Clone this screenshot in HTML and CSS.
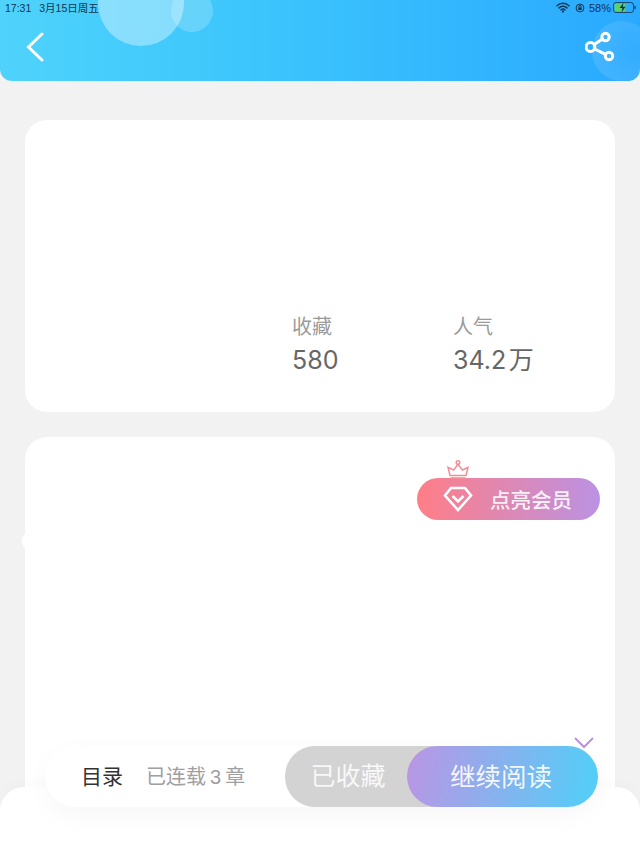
FILE: index.html
```html
<!DOCTYPE html>
<html>
    <head>
        <meta charset="utf-8">
        <meta name="viewport" content="width=device-width, initial-scale=1">
        <link rel="stylesheet" href="styles.css">
    </head>
    <body>
        <header class="cabecera">
            <div class="burbuja burbujaGrande"></div>
            <div class="burbuja burbujaChica"></div>
            <div class="burbuja burbujaDerecha"></div>
            <div class="estado">
                <span class="estadoHora">17:31</span>
                <span class="estadoFecha">3月15日周五</span>
                <div class="dummy"></div>
                <svg class="icoWifi" width="14" height="11" viewBox="0 0 14 11">
                    <path d="M1 3.8 A8.5 8.5 0 0 1 13 3.8 M3.1 5.9 A5.5 5.5 0 0 1 10.9 5.9 M5.1 7.9 A2.7 2.7 0 0 1 8.9 7.9" />
                    <circle cx="7" cy="9.6" r="1.1" />
                </svg>
                <svg class="icoRotacion" width="10" height="10" viewBox="0 0 10 10">
                    <circle cx="5" cy="5" r="3.9" />
                    <rect x="3.3" y="4.4" width="3.4" height="2.6" />
                    <path d="M3.9 4.4 V3.6 A1.1 1.1 0 0 1 6.1 3.6 V4.4" />
                </svg>
                <span class="estadoBateria">58%</span>
                <svg class="icoBateria" width="23" height="11" viewBox="0 0 23 11">
                    <rect class="bateriaBorde" x="0.5" y="0.5" width="20" height="10" rx="2.6" />
                    <rect class="bateriaNivel" x="1.5" y="1.5" width="11" height="8" rx="1.6" />
                    <path class="bateriaRayo" d="M10.6 0.6 L6.6 6 H9.4 L8.4 10.4 L12.6 4.8 H9.8 Z" />
                    <rect class="bateriaPunta" x="21.4" y="3.8" width="1.2" height="3.4" rx="0.6" />
                </svg>
            </div>
            <nav class="barra">
                <button class="botonIcono">
                    <svg width="20" height="32" viewBox="0 0 20 32">
                        <path d="M17 3 L3.5 16 L17 29" />
                    </svg>
                </button>
                <button class="botonIcono">
                    <svg width="30" height="32" viewBox="0 0 30 32">
                        <circle cx="5.5" cy="16" r="4.4" />
                        <circle cx="20.5" cy="6" r="3.7" />
                        <circle cx="24" cy="25" r="3.7" />
                        <path d="M9.3 13.6 L17.4 8 M9.6 18 L20.6 23.4" />
                    </svg>
                </button>
            </nav>
        </header>
        <main class="contenido">
            <section class="tarjeta tarjetaInfo">
                <div class="datos">
                    <div class="dato">
                        <span class="datoNombre">收藏</span>
                        <span class="datoValor">580</span>
                    </div>
                    <div class="dato">
                        <span class="datoNombre">人气</span>
                        <span class="datoValor">34.2 万</span>
                    </div>
                </div>
            </section>
            <section class="tarjeta tarjetaLista">
                <div class="filaMembresia">
                    <button class="membresia">
                        <svg class="corona" width="24" height="19" viewBox="0 0 24 19">
                            <circle cx="12" cy="2.6" r="1.8" />
                            <path d="M12 4.4 L7.6 10 L2 7.4 L4 15.6 H20 L22 7.4 L16.4 10 Z M4.4 18 H19.6" />
                        </svg>
                        <svg class="diamante" width="30" height="26" viewBox="0 0 30 26">
                            <path d="M8 2 H22 L28 9.5 L15 24 L2 9.5 Z" />
                            <path d="M9.5 10 L15 15.5 L20.5 10" />
                        </svg>
                        <span>点亮会员</span>
                    </button>
                </div>
                <div class="dummy"></div>
                <svg class="flechaAbajo" width="20" height="12" viewBox="0 0 20 12">
                    <path d="M1 1 L10 10 L19 1" />
                </svg>
            </section>
        </main>
        <div class="hoja"></div>
        <div class="acciones">
            <span class="accionesTitulo">目录</span>
            <span class="accionesCapitulos">已连载 3 章</span>
            <div class="dummy"></div>
            <div class="botones">
                <button class="btnColeccion">已收藏</button>
                <button class="btnLeer">继续阅读</button>
            </div>
        </div>
    </body>
</html>
```

FILE: styles.css
```css
html,
body {
    height  : 853px;
    margin  : 0;
    overflow: hidden;
    padding : 0;
    width   : 640px;
}

body {
    background-color: #f2f2f2;
    display         : flex;
    flex-direction  : column;
    font-family     : "Liberation Sans", "Noto Sans CJK SC", sans-serif;
    position        : relative;
}

button {
    background-color: transparent;
    border          : none;
    font-family     : inherit;
    padding         : 0;
}

.dummy {
    flex: 1 1 0;
}

/* Cabecera */
.cabecera {
    background   : linear-gradient( 90deg, #4fd3fb 0%, #3cc5fc 40%, #2aa9ff 100% );
    border-radius: 0 0 12px 12px;
    box-sizing   : border-box;
    height       : 81px;
    overflow     : hidden;
    position     : relative;
}

.burbuja {
    border-radius: 50%;
    position     : absolute;
}

.burbujaGrande {
    background-color: hsla( 0, 0%, 100%, 0.36 );
    height          : 86px;
    left            : 98px;
    top             : -40px;
    width           : 86px;
}

.burbujaChica {
    background-color: hsla( 0, 0%, 100%, 0.2 );
    height          : 42px;
    left            : 171px;
    top             : -10px;
    width           : 42px;
}

.burbujaDerecha {
    background: radial-gradient( circle at 70% 50%, hsla( 0, 0%, 100%, 0.04 ), hsla( 0, 0%, 100%, 0.13 ) );
    height    : 60px;
    left      : 592px;
    top       : 21px;
    width     : 60px;
}

.estado {
    align-items: center;
    color      : #10344f;
    display    : flex;
    font-size  : 10.5px;
    height     : 15px;
    padding    : 0 4px 0 5px;
    position   : relative;
}

.estadoFecha {
    margin-left: 8px;
}

.icoWifi {
    margin-right: 5px;
}

.icoWifi path {
    fill          : none;
    stroke        : #10344f;
    stroke-linecap: round;
    stroke-width  : 1.5;
}

.icoWifi circle {
    fill: #10344f;
}

.icoRotacion {
    margin-right: 4px;
}

.icoRotacion circle,
.icoRotacion path {
    fill        : none;
    stroke      : #10344f;
    stroke-width: 1;
}

.icoRotacion rect {
    fill: #10344f;
}

.estadoBateria {
    font-size   : 11px;
    margin-right: 2px;
}

.bateriaBorde {
    fill        : none;
    stroke      : #10344f;
    stroke-width: 0.8;
}

.bateriaNivel {
    fill: #5fd06b;
}

.bateriaRayo,
.bateriaPunta {
    fill: #10344f;
}

.barra {
    align-items    : center;
    display        : flex;
    justify-content: space-between;
    margin-top     : 16px;
    padding        : 0 25px;
    position       : relative;
}

.botonIcono {
    fill  : none;
    height: 32px;
    stroke: #fff;
}

.botonIcono svg {
    display       : block;
    stroke-linecap: round;
    stroke-width  : 3;
}

/* Tarjetas */
.contenido {
    display       : flex;
    flex          : 1 0 auto;
    flex-direction: column;
    gap           : 25px;
    padding       : 39px 25px 0;
}

.tarjeta {
    background-color: #fff;
    border-radius   : 22px;
}

.tarjetaInfo {
    align-items    : flex-start;
    box-sizing     : border-box;
    display        : flex;
    flex-direction : column;
    height         : 292px;
    justify-content: flex-end;
    padding        : 0 0 37px 267px;
}

.datos {
    display: flex;
}

.dato {
    display       : flex;
    flex-direction: column;
    gap           : 6px;
    width         : 161px;
}

.datoNombre {
    color      : #9b9b9b;
    font-size  : 20px;
    line-height: 24px;
}

.datoValor {
    color       : #666;
    font-family : Inter, "Noto Sans CJK SC", sans-serif;
    font-size   : 25px;
    line-height : 30px;
    word-spacing: -4.5px;
}

.tarjetaLista {
    border-radius : 22px 22px 0 0;
    display       : flex;
    flex          : 1 0 auto;
    flex-direction: column;
    padding       : 41px 15px 0 0;
    position      : relative;
}

/* Restos blancos del recorte */
.tarjetaLista::before {
    background-color: #fff;
    border-radius   : 50%;
    content         : "";
    height          : 16px;
    left            : -3px;
    position        : absolute;
    top             : 96px;
    width           : 12px;
}

.filaMembresia {
    display        : flex;
    justify-content: flex-end;
}

.membresia {
    align-items  : center;
    background   : linear-gradient( 90deg, #ff7e86 0%, #bb92e3 100% );
    border-radius: 21px;
    color        : #fff;
    display      : flex;
    font-size    : 20.5px;
    font-weight  : 500;
    height       : 42px;
    position     : relative;
    width        : 183px;
}

.membresia span {
    color      : hsla( 0, 0%, 100%, 0.88 );
    margin-left: 17px;
}

.diamante {
    fill        : none;
    margin-left : 26px;
    stroke      : #fff;
    stroke-width: 2.6;
}

.corona {
    fill        : none;
    left        : 29px;
    position    : absolute;
    stroke      : #f58d95;
    stroke-width: 1.5;
    top         : -18px;
}

.flechaAbajo {
    align-self  : flex-end;
    fill        : none;
    margin      : 0 6px 104px 0;
    stroke      : #b892e0;
    stroke-width: 2;
}

/* Barra inferior */
.hoja {
    background-color: #fff;
    border-radius   : 24px 24px 0 0;
    bottom          : 0;
    box-shadow      : 0 -6px 14px hsla( 0, 0%, 0%, 0.015 );
    height          : 66px;
    left            : 0;
    position        : absolute;
    right           : 0;
}

.acciones {
    align-items     : center;
    background-color: #fff;
    border-radius   : 31px;
    box-shadow      : 0 8px 26px hsla( 0, 0%, 0%, 0.035 );
    display         : flex;
    height          : 61px;
    left            : 45px;
    padding-left    : 36px;
    position        : absolute;
    top             : 746px;
    width           : 517px;
}

.accionesTitulo {
    color    : #333;
    font-size: 21px;
    position : relative;
    top      : -2px;
}

.accionesCapitulos {
    color       : #a0a0a0;
    font-size   : 20px;
    margin-left : 23px;
    position    : relative;
    top         : -1px;
    word-spacing: -1.5px;
}

.botones {
    display: flex;
    height : 61px;
}

.btnColeccion {
    background-color: #d3d3d3;
    border-radius   : 30px 0 0 30px;
    color           : hsla( 0, 0%, 100%, 0.85 );
    font-size       : 25px;
    margin-right    : -40px;
    padding-bottom  : 5px;
    padding-right   : 36px;
    width           : 162px;
}

.btnLeer {
    background    : linear-gradient( 100deg, #bb95e4 0%, #4fd0f8 100% );
    border-radius : 31px;
    color         : hsla( 0, 0%, 100%, 0.92 );
    font-size     : 25.5px;
    padding-bottom: 5px;
    padding-right : 3px;
    position      : relative;
    width         : 191px;
}
```
